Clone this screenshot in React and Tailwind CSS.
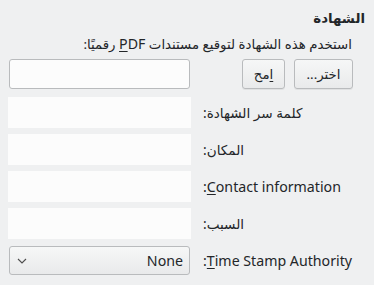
export default function App() {
  const btn =
    "h-[30px] flex items-center justify-center rounded-[3px] border border-[#b9bbbd] bg-gradient-to-b from-[#f6f7f7] to-[#e9eaeb] shadow-[0_1px_0_rgba(0,0,0,0.06)]";
  const latin = "text-[14.2px]";

  return (
    <div
      className="w-[374px] h-[285px] bg-[#eff0f1] text-[#232629] text-[13.33px] leading-[18px] overflow-hidden"
      style={{ fontFamily: '"Noto Sans", "DejaVu Sans", sans-serif' }}
    >
      {/* Group title */}
      <div dir="rtl" className="pt-[9px] pr-[9px] font-bold">
        الشهادة
      </div>
      <div dir="rtl" className="mt-[8px] pr-[22px]">
        استخدم هذه الشهادة لتوقيع مستندات{" "}
        <span className={latin}>
          <span className="underline underline-offset-2">P</span>DF
        </span>{" "}
        رقميًا:
      </div>

      <div className="pl-[8px] flex flex-col">
        {/* File chooser row */}
        <div className="mt-[6px] flex items-center h-[30px]">
          <div className="w-[181px] ml-[1px] h-[30px] rounded-[3px] border border-[#b9bbbd] bg-[#fcfcfc]" />
          <div className={btn + " ml-[52px] w-[43px]"} dir="rtl">
            <span>
              <span className="underline underline-offset-2">ا</span>مح
            </span>
          </div>
          <div className={btn + " ml-[9px] w-[59px]"} dir="rtl">
            اختر...
          </div>
        </div>

        {/* Form rows */}
        {[
          { label: "كلمة سر الشهادة:", mt: "mt-[8px]" },
          { label: "المكان:", mt: "mt-[6px]" },
          {
            label: (
              <span className={latin}>
                <span className="underline underline-offset-2">C</span>ontact information:
              </span>
            ),
            mt: "mt-[6px]",
          },
          { label: "السبب:", mt: "mt-[6px]" },
        ].map((row, i) => (
          <div key={i} className={"flex items-center h-[31px] " + row.mt}>
            <div className="w-[183px] h-[31px] bg-[#fcfcfc]" />
            <div dir="rtl" className="ml-[12px] w-[165px] text-left whitespace-nowrap text-[13.6px]">
              {row.label}
            </div>
          </div>
        ))}

        {/* Time stamp authority */}
        <div className="mt-[7px] flex items-center h-[29px]">
          <div className="w-[181px] ml-[1px] h-[29px] rounded-[3px] border border-[#b9bbbd] bg-gradient-to-b from-[#f6f7f7] to-[#e9eaeb] flex items-center justify-between pl-[7px] pr-[6px]">
            <svg width="10" height="6" viewBox="0 0 10 6" className="mt-[1px]">
              <path d="M1 1 L5 5 L9 1" fill="none" stroke="#4d4d4d" strokeWidth="1.1" />
            </svg>
            <span className={latin}>None</span>
          </div>
          <div dir="rtl" className={"ml-[13px] w-[165px] text-left whitespace-nowrap " + latin}>
            <span className="underline underline-offset-2">T</span>ime Stamp Authority:
          </div>
        </div>
      </div>
    </div>
  );
}
